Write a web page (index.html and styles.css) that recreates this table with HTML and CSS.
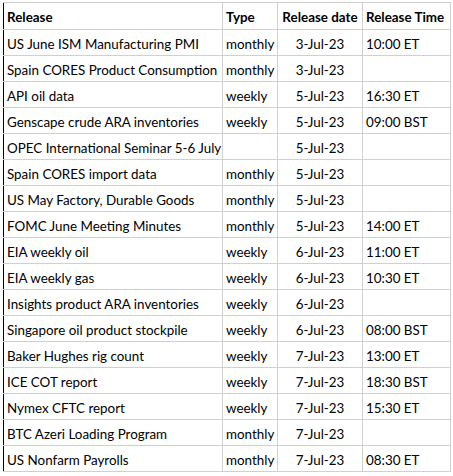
FILE: index.html
```html
<!DOCTYPE html>
<html>
<head>
<meta charset="utf-8">
<link rel="stylesheet" href="styles.css">
</head>
<body>
<table class="sheet">
  <colgroup>
    <col class="c-rel"><col class="c-type"><col class="c-date"><col class="c-time">
  </colgroup>
  <thead>
    <tr><th>Release</th><th>Type</th><th class="ctr">Release date</th><th>Release Time</th></tr>
  </thead>
  <tbody>
    <tr><td>US June ISM Manufacturing PMI</td><td>monthly</td><td class="ctr">3-Jul-23</td><td>10:00 ET</td></tr>
    <tr><td>Spain CORES Product Consumption</td><td>monthly</td><td class="ctr">3-Jul-23</td><td></td></tr>
    <tr><td>API oil data</td><td>weekly</td><td class="ctr">5-Jul-23</td><td>16:30 ET</td></tr>
    <tr><td>Genscape crude ARA inventories</td><td>weekly</td><td class="ctr">5-Jul-23</td><td>09:00 BST</td></tr>
    <tr><td>OPEC International Seminar 5-6 July</td><td></td><td class="ctr">5-Jul-23</td><td></td></tr>
    <tr><td>Spain CORES import data</td><td>monthly</td><td class="ctr">5-Jul-23</td><td></td></tr>
    <tr><td>US May Factory, Durable Goods</td><td>monthly</td><td class="ctr">5-Jul-23</td><td></td></tr>
    <tr><td>FOMC June Meeting Minutes</td><td>monthly</td><td class="ctr">5-Jul-23</td><td>14:00 ET</td></tr>
    <tr><td>EIA weekly oil</td><td>weekly</td><td class="ctr">6-Jul-23</td><td>11:00 ET</td></tr>
    <tr><td>EIA weekly gas</td><td>weekly</td><td class="ctr">6-Jul-23</td><td>10:30 ET</td></tr>
    <tr><td>Insights product ARA inventories</td><td>weekly</td><td class="ctr">6-Jul-23</td><td></td></tr>
    <tr><td>Singapore oil product stockpile</td><td>weekly</td><td class="ctr">6-Jul-23</td><td>08:00 BST</td></tr>
    <tr><td>Baker Hughes rig count</td><td>weekly</td><td class="ctr">7-Jul-23</td><td>13:00 ET</td></tr>
    <tr><td>ICE COT report</td><td>weekly</td><td class="ctr">7-Jul-23</td><td>18:30 BST</td></tr>
    <tr><td>Nymex CFTC report</td><td>weekly</td><td class="ctr">7-Jul-23</td><td>15:30 ET</td></tr>
    <tr><td>BTC Azeri Loading Program</td><td>monthly</td><td class="ctr">7-Jul-23</td><td></td></tr>
    <tr><td>US Nonfarm Payrolls</td><td>monthly</td><td class="ctr">7-Jul-23</td><td>08:30 ET</td></tr>
  </tbody>
</table>
</body>
</html>
```
FILE: styles.css
```css
html, body {
  margin: 0;
  padding: 0;
  background: #ffffff;
}
body {
  padding: 2px 0 0 3px;
}
.sheet {
  border-collapse: collapse;
  table-layout: fixed;
  width: 447px;
  font-family: Lato, "Liberation Sans", sans-serif;
  font-size: 13.4px;
  color: #000;
}
.c-rel { width: 219px; }
.c-type { width: 55px; }
.c-date { width: 85px; }
.c-time { width: 88px; }
.sheet th, .sheet td {
  border: 1px solid #d0d0d0;
  height: 26px;
  padding: 2px 0 0 3px;
  box-sizing: border-box;
  text-align: left;
  white-space: nowrap;
  overflow: hidden;
  vertical-align: middle;
}
.sheet th {
  font-weight: bold;
  height: 27px;
}
.sheet .ctr {
  text-align: center;
  padding: 2px 0 0 0;
}
.sheet tr > :first-child {
  border-left: 1px solid #000;
}
```
